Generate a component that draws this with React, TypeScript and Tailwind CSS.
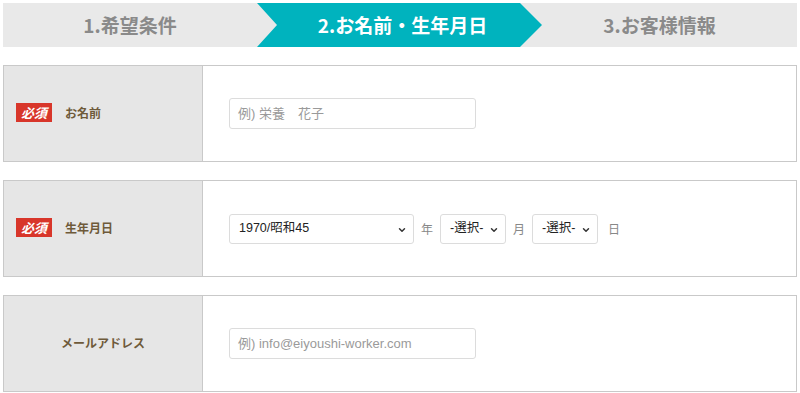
import { ChevronDown } from 'lucide-react'

const jp = "font-['Noto_Sans_CJK_JP','Noto_Sans',sans-serif]"
const sans = "font-['Liberation_Sans','Noto_Sans_CJK_JP',sans-serif]"

function Required() {
  return (
    <span className={`flex h-[19px] w-[36px] items-center justify-center bg-[#d8362a] text-[13px] font-bold italic leading-none text-white ${jp}`}>
      必須
    </span>
  )
}

function Select({ value, width }: { value: string; width: string }) {
  return (
    <div className={`relative flex h-[30px] ${width} shrink-0 items-center whitespace-nowrap rounded-[3px] border border-[#dcdcdc] bg-white pl-[9px] text-[12.5px] text-[#222] ${sans}`}>
      {value}
      <ChevronDown className="absolute right-[6px] top-[10px] h-[10px] w-[10px] text-[#333]" strokeWidth={3.5} />
    </div>
  )
}

function Row({ label, required, children }: { label: string; required?: boolean; children: React.ReactNode }) {
  return (
    <div className="flex h-[97px] border border-[#c9c9c9]">
      <div className={`flex w-[199px] shrink-0 items-center border-r border-[#c9c9c9] bg-[#e6e6e6] pb-[2px] ${required ? 'gap-[13px] pl-[12px]' : 'justify-center'}`}>
        {required && <Required />}
        <span className={`text-[12px] font-bold text-[#6e5a3a] ${jp}`}>{label}</span>
      </div>
      <div className="flex flex-1 items-center bg-white pl-[26px]">{children}</div>
    </div>
  )
}

function Input({ placeholder }: { placeholder: string }) {
  return (
    <div className={`flex h-[31px] w-[247px] items-center rounded-[3px] border border-[#dcdcdc] bg-white pl-[8px] text-[13px] text-[#9a9a9a] ${sans}`}>
      {placeholder}
    </div>
  )
}

export default function App() {
  return (
    <div className="h-[393px] w-[800px] overflow-hidden bg-white px-[3px] pt-[3px]">
      {/* Steps */}
      <div className={`flex h-[44px] bg-[#e9e9e9] text-[19px] font-bold ${jp}`}>
        <div className="flex w-[254px] items-center justify-center text-[#8a8a8a]">1.希望条件</div>
        <div className="flex w-[285px] items-center justify-center bg-[#00b3be] pl-[6px] text-white [clip-path:polygon(0_0,263px_0,285px_50%,263px_100%,0_100%,20px_50%)]">
          2.お名前・生年月日
        </div>
        <div className="flex flex-1 items-center justify-center pr-[20px] text-[#8a8a8a]">3.お客様情報</div>
      </div>

      <div className="mt-[18px] flex flex-col gap-[18px]">
        <Row label="お名前" required>
          <Input placeholder="例) 栄養　花子" />
        </Row>
        <Row label="生年月日" required>
          <div className={`flex items-center text-[12px] text-[#888] ${jp}`}>
            <Select value="1970/昭和45" width="w-[185px]" />
            <span className="mx-[7px]">年</span>
            <Select value="-選択-" width="w-[66px]" />
            <span className="mx-[7px]">月</span>
            <Select value="-選択-" width="w-[66px]" />
            <span className="ml-[10px]">日</span>
          </div>
        </Row>
        <Row label="メールアドレス">
          <Input placeholder="例) info@eiyoushi-worker.com" />
        </Row>
      </div>
    </div>
  )
}
